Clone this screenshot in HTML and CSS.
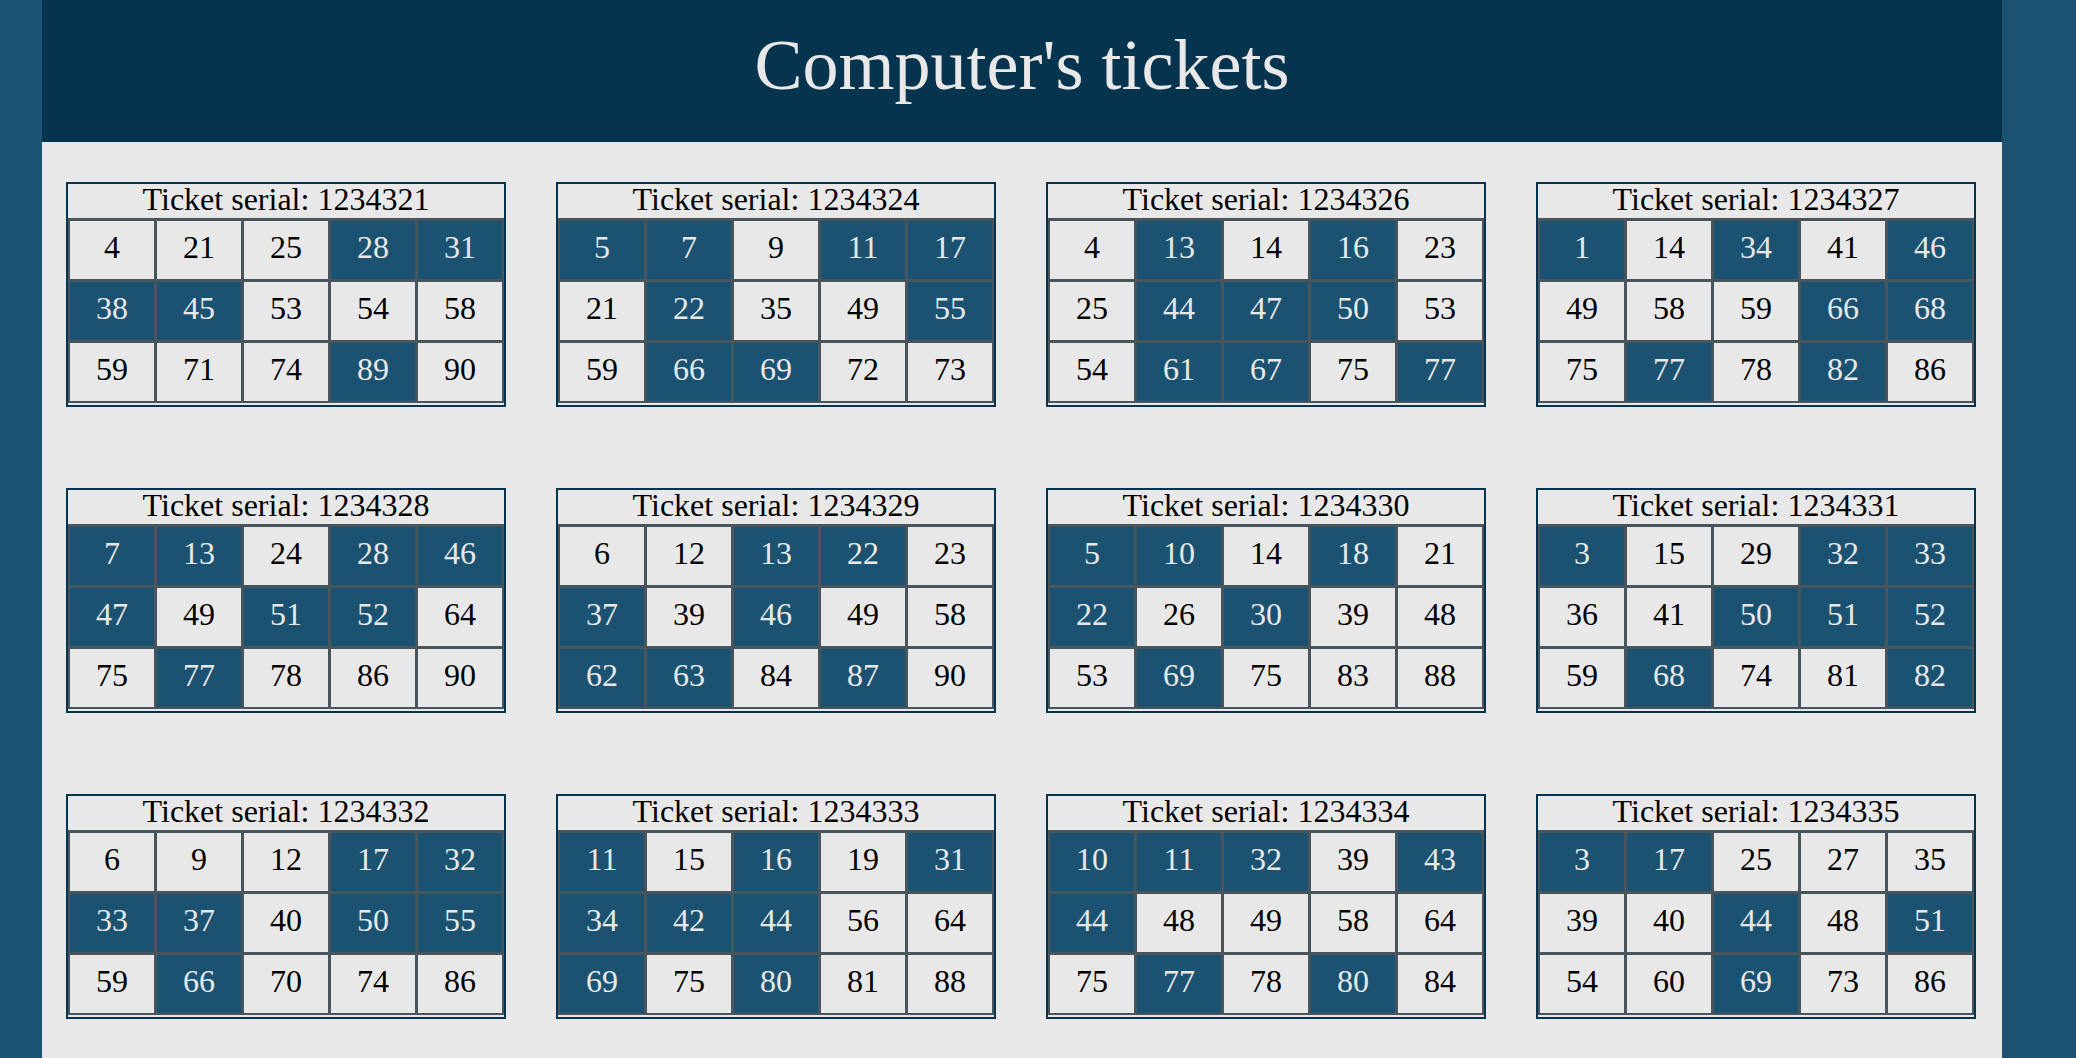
FILE: index.html
```html
<!DOCTYPE html>
<html lang="en">
<head>
    <meta charset="UTF-8">
    <meta name="viewport" content="width=device-width, initial-scale=1.0">
    <title>Computer's tickets</title>
    <link rel="stylesheet" href="styles.css">
</head>
<body>

<div class="page">
    <div class="header">
        <h1>Computer's tickets</h1>
    </div>

    <div class="tickets">

        <div class="ticket">
            <div class="ticket-serial">Ticket serial: 1234321</div>
            <div class="numbers">
                <span class="num">4</span><span class="num">21</span><span class="num">25</span><span class="num marked">28</span><span class="num marked">31</span>
                <span class="num marked">38</span><span class="num marked">45</span><span class="num">53</span><span class="num">54</span><span class="num">58</span>
                <span class="num">59</span><span class="num">71</span><span class="num">74</span><span class="num marked">89</span><span class="num">90</span>
            </div>
        </div>

        <div class="ticket">
            <div class="ticket-serial">Ticket serial: 1234324</div>
            <div class="numbers">
                <span class="num marked">5</span><span class="num marked">7</span><span class="num">9</span><span class="num marked">11</span><span class="num marked">17</span>
                <span class="num">21</span><span class="num marked">22</span><span class="num">35</span><span class="num">49</span><span class="num marked">55</span>
                <span class="num">59</span><span class="num marked">66</span><span class="num marked">69</span><span class="num">72</span><span class="num">73</span>
            </div>
        </div>

        <div class="ticket">
            <div class="ticket-serial">Ticket serial: 1234326</div>
            <div class="numbers">
                <span class="num">4</span><span class="num marked">13</span><span class="num">14</span><span class="num marked">16</span><span class="num">23</span>
                <span class="num">25</span><span class="num marked">44</span><span class="num marked">47</span><span class="num marked">50</span><span class="num">53</span>
                <span class="num">54</span><span class="num marked">61</span><span class="num marked">67</span><span class="num">75</span><span class="num marked">77</span>
            </div>
        </div>

        <div class="ticket">
            <div class="ticket-serial">Ticket serial: 1234327</div>
            <div class="numbers">
                <span class="num marked">1</span><span class="num">14</span><span class="num marked">34</span><span class="num">41</span><span class="num marked">46</span>
                <span class="num">49</span><span class="num">58</span><span class="num">59</span><span class="num marked">66</span><span class="num marked">68</span>
                <span class="num">75</span><span class="num marked">77</span><span class="num">78</span><span class="num marked">82</span><span class="num">86</span>
            </div>
        </div>

        <div class="ticket">
            <div class="ticket-serial">Ticket serial: 1234328</div>
            <div class="numbers">
                <span class="num marked">7</span><span class="num marked">13</span><span class="num">24</span><span class="num marked">28</span><span class="num marked">46</span>
                <span class="num marked">47</span><span class="num">49</span><span class="num marked">51</span><span class="num marked">52</span><span class="num">64</span>
                <span class="num">75</span><span class="num marked">77</span><span class="num">78</span><span class="num">86</span><span class="num">90</span>
            </div>
        </div>

        <div class="ticket">
            <div class="ticket-serial">Ticket serial: 1234329</div>
            <div class="numbers">
                <span class="num">6</span><span class="num">12</span><span class="num marked">13</span><span class="num marked">22</span><span class="num">23</span>
                <span class="num marked">37</span><span class="num">39</span><span class="num marked">46</span><span class="num">49</span><span class="num">58</span>
                <span class="num marked">62</span><span class="num marked">63</span><span class="num">84</span><span class="num marked">87</span><span class="num">90</span>
            </div>
        </div>

        <div class="ticket">
            <div class="ticket-serial">Ticket serial: 1234330</div>
            <div class="numbers">
                <span class="num marked">5</span><span class="num marked">10</span><span class="num">14</span><span class="num marked">18</span><span class="num">21</span>
                <span class="num marked">22</span><span class="num">26</span><span class="num marked">30</span><span class="num">39</span><span class="num">48</span>
                <span class="num">53</span><span class="num marked">69</span><span class="num">75</span><span class="num">83</span><span class="num">88</span>
            </div>
        </div>

        <div class="ticket">
            <div class="ticket-serial">Ticket serial: 1234331</div>
            <div class="numbers">
                <span class="num marked">3</span><span class="num">15</span><span class="num">29</span><span class="num marked">32</span><span class="num marked">33</span>
                <span class="num">36</span><span class="num">41</span><span class="num marked">50</span><span class="num marked">51</span><span class="num marked">52</span>
                <span class="num">59</span><span class="num marked">68</span><span class="num">74</span><span class="num">81</span><span class="num marked">82</span>
            </div>
        </div>

        <div class="ticket">
            <div class="ticket-serial">Ticket serial: 1234332</div>
            <div class="numbers">
                <span class="num">6</span><span class="num">9</span><span class="num">12</span><span class="num marked">17</span><span class="num marked">32</span>
                <span class="num marked">33</span><span class="num marked">37</span><span class="num">40</span><span class="num marked">50</span><span class="num marked">55</span>
                <span class="num">59</span><span class="num marked">66</span><span class="num">70</span><span class="num">74</span><span class="num">86</span>
            </div>
        </div>

        <div class="ticket">
            <div class="ticket-serial">Ticket serial: 1234333</div>
            <div class="numbers">
                <span class="num marked">11</span><span class="num">15</span><span class="num marked">16</span><span class="num">19</span><span class="num marked">31</span>
                <span class="num marked">34</span><span class="num marked">42</span><span class="num marked">44</span><span class="num">56</span><span class="num">64</span>
                <span class="num marked">69</span><span class="num">75</span><span class="num marked">80</span><span class="num">81</span><span class="num">88</span>
            </div>
        </div>

        <div class="ticket">
            <div class="ticket-serial">Ticket serial: 1234334</div>
            <div class="numbers">
                <span class="num marked">10</span><span class="num marked">11</span><span class="num marked">32</span><span class="num">39</span><span class="num marked">43</span>
                <span class="num marked">44</span><span class="num">48</span><span class="num">49</span><span class="num">58</span><span class="num">64</span>
                <span class="num">75</span><span class="num marked">77</span><span class="num">78</span><span class="num marked">80</span><span class="num">84</span>
            </div>
        </div>

        <div class="ticket">
            <div class="ticket-serial">Ticket serial: 1234335</div>
            <div class="numbers">
                <span class="num marked">3</span><span class="num marked">17</span><span class="num">25</span><span class="num">27</span><span class="num">35</span>
                <span class="num">39</span><span class="num">40</span><span class="num marked">44</span><span class="num">48</span><span class="num marked">51</span>
                <span class="num">54</span><span class="num">60</span><span class="num marked">69</span><span class="num">73</span><span class="num">86</span>
            </div>
        </div>

    </div>
</div>

</body>
</html>
```

FILE: styles.css
```css
body {
    font-family: 'Liberation Serif', 'Times New Roman', serif;
    background-color: #1b5272;
    margin: 0;
    padding: 0;
}
.page {
    width: 1960px;
    margin-left: 42px;
    min-height: 100vh;
    background: #e8e8e8;
}
.header {
    background: #06334d;
    height: 142px;
    padding-top: 24px;
    box-sizing: border-box;
    text-align: center;
}
h1 {
    margin: 0;
    color: #e8e8e8;
    font-size: 72px;
    font-weight: normal;
    line-height: 82px;
}
.tickets {
    display: grid;
    grid-template-columns: repeat(4, 440px);
    column-gap: 50px;
    row-gap: 81px;
    padding: 40px 24px 40px 24px;
}
.ticket {
    width: 440px;
    box-sizing: border-box;
    border: 2px solid #06334d;
    padding-bottom: 2px;
    background: #e8e8e8;
}
.ticket-serial {
    height: 34px;
    line-height: 30px;
    font-size: 32px;
    text-align: center;
    color: #000;
}
.numbers {
    display: grid;
    grid-template-columns: repeat(5, 1fr);
    grid-auto-rows: 58px;
    gap: 3px;
    padding: 3px 2px 2px 2px;
    background: #48555c;
}
.num {
    background: #e8e8e8;
    color: #000;
    font-size: 32px;
    line-height: 52px;
    text-align: center;
}
.num.marked {
    background: #1b5272;
    color: #e8e8e8;
}
```
